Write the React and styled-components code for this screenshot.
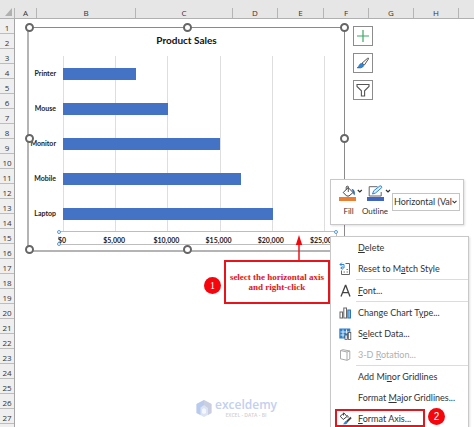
import React, { useState } from "react";
import styled, { createGlobalStyle } from "styled-components";

const GlobalStyle = createGlobalStyle`
  * {
    box-sizing: border-box;
  }
  body {
    margin: 0;
    background: #fff;
    font-family: "Open Sans", "Noto Sans", sans-serif;
    color: #333;
  }
  button,
  select {
    font: inherit;
    color: inherit;
    background: none;
    border: none;
    padding: 0;
    margin: 0;
  }
`;

const Sheet = styled.main`
  display: flex;
  flex-direction: column;
  height: 100vh;
  overflow: hidden;
`;

const ColumnHeader = styled.div`
  display: flex;
  align-items: flex-end;
  flex: none;
  height: 19px;
  background: #e6e6e6;
  border-bottom: 1px solid #b0b0b0;
`;

const Corner = styled.div`
  display: flex;
  justify-content: flex-end;
  width: 15px;
  height: 10px;
  padding: 0 2px 2px 0;
  border-right: 1px solid #b5b5b5;
`;

const ColumnCell = styled.div`
  width: ${(props) => props.$width}px;
  height: 10px;
  border-right: 1px solid #b5b5b5;
  font-size: 8px;
  line-height: 9px;
  text-align: center;
`;

const SheetBody = styled.div`
  display: flex;
  flex: 1;
  min-height: 0;
`;

const RowHeader = styled.div`
  flex: none;
  width: 15px;
  background: #efefef;
  border-right: 1px solid #a6a6a6;
`;

const RowCell = styled.div`
  height: 15px;
  border-bottom: 1px solid #bdbdbd;
  font-size: 8px;
  line-height: 18px;
  text-align: center;
`;

const Canvas = styled.div`
  position: relative;
  flex: 1;
`;

const Chart = styled.section`
  position: absolute;
  left: 12px;
  top: 8px;
  width: 318px;
  height: 225px;
  border: 1px solid #8a8a8a;
  border-left: 2px solid #b4b4b4;
  border-bottom: 2px solid #b4b4b4;
  background: #fff;
`;

const Handle = styled.span`
  position: absolute;
  left: ${(props) => props.$x};
  top: ${(props) => props.$y};
  width: 9px;
  height: 9px;
  margin: -5px -4px;
  border: 2px solid #666;
  border-radius: 50%;
  background: #fff;
`;

const ChartTitle = styled.h2`
  margin: 0;
  height: 28px;
  font-family: Lato, "Open Sans", sans-serif;
  font-size: 10px;
  line-height: 24px;
  font-weight: 700;
  text-align: center;
  color: #111;
`;

const ChartBody = styled.div`
  display: grid;
  grid-template-columns: 34px 262px;
`;

const Categories = styled.div`
  display: flex;
  flex-direction: column;
  align-items: flex-end;
  padding-right: 7px;
`;

const ChartLabel = styled.span`
  font-family: Lato, "Open Sans", sans-serif;
  font-size: 7px;
  font-weight: 700;
  line-height: 35px;
  color: #222;
`;

const Plot = styled.div`
  position: relative;
`;

const Gridlines = styled.div`
  position: absolute;
  inset: 0;
  display: grid;
  grid-template-columns: repeat(5, 1fr);
  border-right: 1px solid #dedede;
`;

const GridCell = styled.span`
  border-left: 1px solid #dedede;
`;

const BarTrack = styled.div`
  position: relative;
  display: flex;
  align-items: center;
  height: 35px;
`;

const Bar = styled.div`
  height: 12px;
  background: #4472c4;
`;

const Axis = styled.div`
  position: relative;
  display: flex;
  justify-content: space-between;
  height: 14px;
  margin: 0 7px 0 29px;
  padding: 0 13px 0 3px;
  border: 1px solid #bdbdbd;
  border-left: 1px dashed #9cc3e6;
`;

const Tick = styled.span`
  display: flex;
  justify-content: center;
  width: 0;
  font-family: Lato, "Open Sans", sans-serif;
  font-size: 7px;
  font-weight: 700;
  line-height: 16px;
  color: #222;
`;

const AxisHandle = styled.span`
  position: absolute;
  left: ${(props) => props.$x};
  top: ${(props) => props.$y};
  width: 4px;
  height: 4px;
  margin: -2px;
  border: 1px solid #5b9bd5;
  border-radius: 50%;
  background: #fff;
`;

const ChartButtons = styled.div`
  position: absolute;
  left: 338px;
  top: 7px;
  display: flex;
  flex-direction: column;
  gap: 7px;
`;

const ChartButton = styled.button`
  display: flex;
  align-items: center;
  justify-content: center;
  width: 20px;
  height: 20px;
  border: 1px solid #8c8c8c;
  background: #fff;
`;

const Callout = styled.div`
  position: absolute;
  left: 209px;
  top: 241px;
  width: 106px;
  height: 44px;
  padding-top: 10px;
  border: 2px solid #e8141c;
  background: #fff;
  font-family: "Liberation Serif", serif;
  font-size: 9px;
  font-weight: 700;
  line-height: 10px;
  text-align: center;
  white-space: nowrap;
  color: #e0141c;
`;

const Arrow = styled.svg`
  position: absolute;
  left: 69px;
  top: -28px;
`;

const Badge = styled.span`
  position: absolute;
  left: ${(props) => props.$x}px;
  top: ${(props) => props.$y}px;
  width: 17px;
  height: 17px;
  border-radius: 50%;
  background: #f5050c;
  color: #fff;
  font-family: ${(props) => props.$font};
  font-size: 10px;
  font-weight: 400;
  line-height: 17px;
  text-align: center;
`;

const MiniToolbar = styled.div`
  position: absolute;
  left: 315px;
  top: 160px;
  display: flex;
  width: 134px;
  height: 46px;
  padding: 5px 3px 0 8px;
  border: 1px solid #c8c8c8;
  background: #fff;
  box-shadow: 1px 1px 2px rgba(0, 0, 0, 0.12);
  font-family: Lato, "Open Sans", sans-serif;
`;

const ToolButton = styled.button`
  display: flex;
  flex-direction: column;
  align-items: center;
  gap: 2px;
  width: ${(props) => props.$width}px;
  height: 32px;
  font-size: 8px;
  line-height: 12px;
`;

const ToolLabel = styled.span`
  padding-right: 6px;
`;

const SelectBox = styled.label`
  display: flex;
  align-items: center;
  flex: 1;
  min-width: 0;
  height: 18px;
  margin-top: 8px;
  padding: 0 2px 0 1px;
  border: 1px solid #c4c4c4;
`;

const ElementSelect = styled.select`
  appearance: none;
  flex: 1;
  min-width: 0;
  height: 16px;
  font-size: 9px;
  line-height: 16px;
  white-space: nowrap;
  outline: none;
`;

const Menu = styled.div`
  position: absolute;
  left: 315px;
  top: 217px;
  width: 139px;
  padding-bottom: 4px;
  border: 1px solid #c8c8c8;
  background: #fff;
  box-shadow: 1px 1px 2px rgba(0, 0, 0, 0.12);
  font-family: Lato, "Open Sans", sans-serif;
`;

const MenuRow = styled.div`
  position: relative;
`;

const MenuItem = styled.button`
  display: grid;
  grid-template-columns: 27px 1fr;
  align-items: center;
  width: 100%;
  height: 21px;
  font-size: 9px;
  line-height: 20px;
  text-align: left;
  white-space: nowrap;
  color: ${(props) => (props.disabled ? "#b0b0b0" : "#333")};

  svg {
    margin-left: 8px;
  }

  &:hover:enabled {
    background: #f0f0f0;
  }
`;

const MenuLabel = styled.span`
  grid-column: 2;

  u {
    text-underline-offset: 1px;
  }
`;

const Separator = styled.hr`
  height: 1px;
  margin: 0 0 0 25px;
  border: none;
  background: #dcdcdc;
`;

const Highlight = styled.span`
  position: absolute;
  left: 4px;
  top: 1px;
  width: 90px;
  height: 18px;
  border: 2px solid #e8141c;
  pointer-events: none;
`;

const Watermark = styled.div`
  position: absolute;
  left: 181px;
  top: 379px;
  display: flex;
  align-items: center;
  gap: 3px;
`;

const Brand = styled.div`
  display: flex;
  flex-direction: column;
  align-items: center;
  font-size: 12px;
  font-weight: 600;
  line-height: 14px;
  color: #c3d0ee;
`;

const Tagline = styled.small`
  font-size: 5px;
  line-height: 6px;
  font-weight: 600;
  color: #cfcfd4;
`;

const columns = [
  ["A", 22],
  ["B", 99],
  ["C", 97],
  ["D", 45],
  ["E", 46],
  ["F", 45],
  ["G", 45],
  ["H", 45],
];

const rows = Array.from({ length: 27 }, (_, i) => i + 1);

const sales = [
  { product: "Printer", amount: 7000 },
  { product: "Mouse", amount: 10000 },
  { product: "Monitor", amount: 15000 },
  { product: "Mobile", amount: 17000 },
  { product: "Laptop", amount: 20000 },
];

const ticks = ["$0", "$5,000", "$10,000", "$15,000", "$20,000", "$25,000"];
const MAX = 25000;

const handles = [
  ["0%", "0%"],
  ["50%", "0%"],
  ["100%", "0%"],
  ["0%", "50%"],
  ["100%", "50%"],
  ["0%", "100%"],
  ["50%", "100%"],
  ["100%", "100%"],
];

const PlusIcon = () => (
  <svg width="14" height="14" viewBox="0 0 14 14" stroke="#3aa865" strokeWidth="1.2">
    <path d="M7 1v12M1 7h12" />
  </svg>
);

const BrushIcon = () => (
  <svg width="14" height="14" viewBox="0 0 14 14" fill="none">
    <path d="M6 7.2L11.4 2.4Q12.9 1.5 12.4 3L8.4 9z" fill="#fff" stroke="#555" strokeWidth="1" />
    <path d="M1 11.8Q2.8 11 3.2 9.2Q4.2 6.9 6.2 7.5Q8.3 8.6 7.3 10.5Q5.3 12.8 1 11.8z" fill="#2e86d6" stroke="#27609a" strokeWidth=".6" />
  </svg>
);

const FunnelIcon = () => (
  <svg width="14" height="14" viewBox="0 0 14 14" fill="none" stroke="#555" strokeWidth="1.1">
    <path d="M1 1.500h12v2L8.600 7.800V13H5.400V7.800L1 3.500z" />
  </svg>
);

const Chevron = () => (
  <svg width="5" height="4" viewBox="0 0 5 4" fill="none" stroke="#333" strokeWidth="1.1">
    <path d="M.5.8l2 2 2-2" />
  </svg>
);

const FillIcon = () => (
  <svg width="25" height="18" viewBox="0 0 25 18" fill="none">
    <path d="M4.2 7.5L9.2 2.6l4.8 4.9-4 3.500H7.700z" fill="#fff" stroke="#444" strokeWidth="1" />
    <path d="M9.3 7V1.5Q8 .3 7.200 2v2.600" stroke="#444" strokeWidth=".9" />
    <path d="M12.600 3.800Q17 5 15.600 10.500Q13.800 9 14 7.400z" fill="#2f6db5" />
    <path d="M18.8 5l2 2 2-2" stroke="#333" strokeWidth="1.2" />
    <rect x="0" y="12" width="17" height="4" fill="#ed7d31" />
  </svg>
);

const OutlineIcon = () => (
  <svg width="25" height="18" viewBox="0 0 25 18" fill="none">
    <path d="M11.5 1.7H3.2V11h12V7" stroke="#666" strokeWidth="1" />
    <path d="M6.5 9l1.2-3.2L14 .8q2 0 1.8 1.8L9.5 8z" fill="#dcefff" stroke="#2e86d6" strokeWidth="1" />
    <path d="M20 5l2 2 2-2" stroke="#333" strokeWidth="1.2" />
    <rect x="1" y="12" width="17" height="4" fill="#3f66c4" />
  </svg>
);

const ResetIcon = () => (
  <svg width="13" height="14" viewBox="0 0 13 14" fill="none" strokeWidth="1">
    <path d="M6.500 1.500h4v11h-8V8.500" stroke="#666" />
    <path d="M4.500 10h1.500M7.500 10h1.500M7.500 7.500h1.500" stroke="#777" />
    <path d="M5 6V2.500H1M2.800.7L1 2.500l1.800 1.800M5 6H1.800M3.500 4.500L1.800 6l1.700 1.500" stroke="#2e86d6" />
  </svg>
);

const FontIcon = () => (
  <svg width="13" height="14" viewBox="0 0 13 14" fill="none" stroke="#444" strokeWidth="1.3">
    <path d="M2 12.5L6.4 1.5h.4L11 12.5M3.5 8.7h6" />
  </svg>
);

const ChartTypeIcon = () => (
  <svg width="13" height="12" viewBox="0 0 13 12" strokeWidth="1">
    <rect x="1" y="5" width="2.500" height="6" fill="#fff" stroke="#666" />
    <rect x="4.800" y="1" width="2.700" height="10" fill="#fff" stroke="#666" />
    <rect x="8.800" y="3" width="2.700" height="8" fill="#7db8ea" stroke="#2e75b6" />
  </svg>
);

const SelectDataIcon = () => (
  <svg width="13" height="12" viewBox="0 0 13 12" strokeWidth="1">
    <rect x=".3" y=".5" width="11" height="10" fill="#2e7fc8" />
    <path d="M1.500 4h9M1.500 7h4M4 1.500v8M7.500 1.500v4" stroke="#d9ecfb" />
    <rect x="6" y="7" width="2.200" height="4.500" fill="#fff" stroke="#555" strokeWidth=".8" />
    <rect x="9.300" y="4.500" width="2.500" height="7" fill="#fff" stroke="#555" strokeWidth=".8" />
  </svg>
);

const RotationIcon = () => (
  <svg width="13" height="12" viewBox="0 0 13 12" fill="none" stroke="#aaa" strokeWidth="1">
    <path d="M1.500 1.500l6.500 1.500v8.300l-6.500-1.500zM1.500 1.500L4 .7l6.800 1.300v8L8 11.300M8 3l2.800-1" />
  </svg>
);

const FormatIcon = () => (
  <svg width="13" height="13" viewBox="0 0 13 13" fill="none" strokeWidth="1">
    <path d="M1.200 4.200L5 1l3 3.500L4.200 7.500z" stroke="#444" fill="#fff" />
    <path d="M4.500 3.500V.7M8 3.200q1.500.8 1 2.500" stroke="#444" />
    <path d="M12 5.500L7.500 10" stroke="#444" strokeWidth="1.8" />
    <path d="M3.500 12.300q1.500-.6 2-2Q6.500 8.300 8.200 9.500 9.200 12.800 3.500 12.300z" fill="#2e86d6" />
  </svg>
);

const HexLogo = () => (
  <svg width="16" height="17" viewBox="0 0 16 17">
    <path d="M8 0l7.5 4v9L8 17 .5 13V4z" fill="#dbe3f4" />
    <path d="M8 0L.5 4v9l4 2.1V7.5L8 5z" fill="#b9cbec" />
    <path d="M8 5l4 3v7l3.5-2V4L8 0z" fill="#c9cfe0" />
    <path d="M6 9.5l2-1.5 2 1.5V13l-2 1-2-1z" fill="#f4f7fd" />
  </svg>
);

const SalesChart = () => (
  <Chart aria-label="Product Sales">
    <ChartTitle>Product Sales</ChartTitle>
    <ChartBody>
      <Categories>
        {sales.map((s) => (
          <ChartLabel key={s.product}>{s.product}</ChartLabel>
        ))}
      </Categories>
      <Plot>
        <Gridlines>
          {ticks.slice(1).map((t) => (
            <GridCell key={t} />
          ))}
        </Gridlines>
        {sales.map((s) => (
          <BarTrack key={s.product}>
            <Bar style={{ width: `${(s.amount / MAX) * 100}%` }} />
          </BarTrack>
        ))}
      </Plot>
    </ChartBody>
    <Axis>
      {ticks.map((t) => (
        <Tick key={t}>{t}</Tick>
      ))}
      <AxisHandle $x="0%" $y="0%" />
      <AxisHandle $x="100%" $y="0%" />
      <AxisHandle $x="0%" $y="100%" />
    </Axis>
    {handles.map(([x, y]) => (
      <Handle key={x + y} $x={x} $y={y} />
    ))}
  </Chart>
);

const ContextMenu = () => (
  <Menu role="menu">
    <MenuItem role="menuitem">
      <MenuLabel><u>D</u>elete</MenuLabel>
    </MenuItem>
    <MenuItem role="menuitem">
      <ResetIcon />
      <MenuLabel>Reset to M<u>a</u>tch Style</MenuLabel>
    </MenuItem>
    <Separator />
    <MenuItem role="menuitem">
      <FontIcon />
      <MenuLabel><u>F</u>ont...</MenuLabel>
    </MenuItem>
    <Separator />
    <MenuItem role="menuitem">
      <ChartTypeIcon />
      <MenuLabel>Change Chart T<u>y</u>pe...</MenuLabel>
    </MenuItem>
    <MenuItem role="menuitem">
      <SelectDataIcon />
      <MenuLabel>S<u>e</u>lect Data...</MenuLabel>
    </MenuItem>
    <MenuItem role="menuitem" disabled>
      <RotationIcon />
      <MenuLabel>3-D <u>R</u>otation...</MenuLabel>
    </MenuItem>
    <Separator />
    <MenuItem role="menuitem">
      <MenuLabel>Add Mi<u>n</u>or Gridlines</MenuLabel>
    </MenuItem>
    <MenuItem role="menuitem">
      <MenuLabel>Format <u>M</u>ajor Gridlines...</MenuLabel>
    </MenuItem>
    <MenuRow>
      <MenuItem role="menuitem">
        <FormatIcon />
        <MenuLabel><u>F</u>ormat Axis...</MenuLabel>
      </MenuItem>
      <Highlight />
      <Badge $x={97} $y={0} $font='"Liberation Sans", sans-serif'>2</Badge>
    </MenuRow>
  </Menu>
);

function App() {
  const [element, setElement] = useState("horizontal");

  return (
    <>
      <GlobalStyle />
      <Sheet>
        <ColumnHeader>
          <Corner>
            <svg width="7" height="8" viewBox="0 0 7 8">
              <path d="M7 0v8H0z" fill="#b0b0b0" />
            </svg>
          </Corner>
          {columns.map(([name, width]) => (
            <ColumnCell key={name} $width={width}>{name}</ColumnCell>
          ))}
        </ColumnHeader>
        <SheetBody>
          <RowHeader>
            {rows.map((n) => (
              <RowCell key={n}>{n}</RowCell>
            ))}
          </RowHeader>
          <Canvas>
            <SalesChart />
            <ChartButtons>
              <ChartButton aria-label="Chart Elements"><PlusIcon /></ChartButton>
              <ChartButton aria-label="Chart Styles"><BrushIcon /></ChartButton>
              <ChartButton aria-label="Chart Filters"><FunnelIcon /></ChartButton>
            </ChartButtons>
            <Watermark>
              <HexLogo />
              <Brand>
                exceldemy
                <Tagline>EXCEL - DATA - BI</Tagline>
              </Brand>
            </Watermark>
            <MiniToolbar>
              <ToolButton $width={25}>
                <FillIcon />
                <ToolLabel>Fill</ToolLabel>
              </ToolButton>
              <ToolButton $width={28}>
                <OutlineIcon />
                <ToolLabel>Outline</ToolLabel>
              </ToolButton>
              <SelectBox>
                <ElementSelect
                  aria-label="Chart element"
                  value={element}
                  onChange={(e) => setElement(e.target.value)}
                >
                  <option value="horizontal">Horizontal (Val</option>
                </ElementSelect>
                <Chevron />
              </SelectBox>
            </MiniToolbar>
            <ContextMenu />
            <Callout>
              select the horizontal axis
              <br />
              and right-click
              <Arrow width="8" height="28" viewBox="0 0 8 28">
                <path d="M4 8v20" stroke="#e8141c" strokeWidth="1.5" />
                <path d="M4 1l3.2 10H.8z" fill="#f5050c" />
              </Arrow>
            </Callout>
            <Badge $x={189} $y={258} $font='"Liberation Serif", serif'>1</Badge>
          </Canvas>
        </SheetBody>
      </Sheet>
    </>
  );
}

export default App;
